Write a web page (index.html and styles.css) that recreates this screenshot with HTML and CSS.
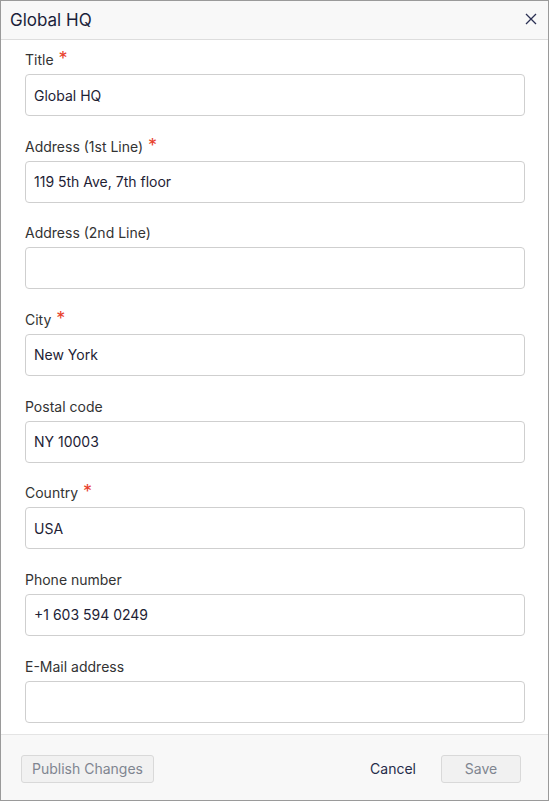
FILE: index.html
```html
<!DOCTYPE html>
<html lang="en">
<head>
<meta charset="utf-8">
<title>Global HQ</title>
<link rel="stylesheet" href="styles.css">
</head>
<body>
<div class="dialog">
  <header class="dialog-header">
    <h1 class="dialog-title">Global HQ</h1>
    <button class="close-btn" aria-label="Close">
      <svg width="12" height="12" viewBox="0 0 12 12"><path d="M1 1 L11 11 M11 1 L1 11" stroke="#2b3154" stroke-width="1.3" fill="none"/></svg>
    </button>
  </header>
  <main class="dialog-body">
    <div class="field">
      <label class="label">Title <span class="req">*</span></label>
      <input class="input" value="Global HQ">
    </div>
    <div class="field">
      <label class="label">Address (1st Line) <span class="req">*</span></label>
      <input class="input" value="119 5th Ave, 7th floor">
    </div>
    <div class="field">
      <label class="label">Address (2nd Line)</label>
      <input class="input" value="">
    </div>
    <div class="field">
      <label class="label">City <span class="req">*</span></label>
      <input class="input" value="New York">
    </div>
    <div class="field">
      <label class="label">Postal code</label>
      <input class="input" value="NY 10003">
    </div>
    <div class="field">
      <label class="label">Country <span class="req">*</span></label>
      <input class="input" value="USA">
    </div>
    <div class="field">
      <label class="label">Phone number</label>
      <input class="input" value="+1 603 594 0249">
    </div>
    <div class="field">
      <label class="label">E-Mail address</label>
      <input class="input" value="">
    </div>
  </main>
  <footer class="dialog-footer">
    <button class="btn btn-disabled">Publish Changes</button>
    <div class="footer-right">
      <button class="btn-link">Cancel</button>
      <button class="btn btn-disabled btn-save">Save</button>
    </div>
  </footer>
</div>
</body>
</html>
```

FILE: styles.css
```css
* { box-sizing: border-box; }
html, body { margin: 0; padding: 0; background: #fff; }
body { font-family: Inter, "Noto Sans", sans-serif; color: #333; }

.dialog {
  width: 549px;
  height: 801px;
  border: 1px solid #9a9a9a;
  display: flex;
  flex-direction: column;
  background: #fff;
}

.dialog-header {
  height: 39px;
  flex: none;
  background: #f8f8f8;
  border-bottom: 1px solid #dddddd;
  display: flex;
  align-items: center;
  justify-content: space-between;
  padding: 0 10px 0 9px;
}
.dialog-title {
  margin: 0;
  font-size: 17px;
  font-weight: 400;
  color: #1b1f3a;
  line-height: 1;
}
.close-btn {
  border: 0;
  background: none;
  padding: 0;
  width: 14px;
  height: 14px;
  display: flex;
  align-items: center;
  justify-content: center;
  margin-top: -2px;
}

.dialog-body {
  flex: 1;
  padding: 9px 23px 0 24px;
  overflow: hidden;
}
.field { margin-bottom: 19.67px; }
.label {
  display: block;
  font-size: 14px;
  line-height: 21px;
  color: #333;
  margin-bottom: 4px;
}
.req {
  color: #e8412c;
  font-size: 18px;
  line-height: 1;
  margin-left: 1px;
}
.input {
  display: block;
  width: 100%;
  height: 42px;
  border: 1px solid #cfcfcf;
  border-radius: 4px;
  padding: 0 8px;
  font-family: inherit;
  font-size: 14px;
  color: #1e2235;
  background: #fff;
  outline: none;
}

.dialog-footer {
  flex: none;
  height: 66px;
  background: #f8f8f8;
  border-top: 1px solid #e4e4e4;
  display: flex;
  align-items: center;
  justify-content: space-between;
  padding: 2px 27px 0 20px;
}
.footer-right { display: flex; align-items: center; gap: 25px; }
.btn {
  height: 28px;
  font-family: inherit;
  font-size: 14px;
  border-radius: 3px;
  padding: 0 10px;
}
.btn-disabled {
  background: #f1f1f1;
  border: 1px solid #d9d9d9;
  color: #7f8590;
}
.btn-save { width: 80px; }
.btn-link {
  border: 0;
  background: none;
  font-family: inherit;
  font-size: 14px;
  color: #262c4a;
  padding: 0;
}
```
